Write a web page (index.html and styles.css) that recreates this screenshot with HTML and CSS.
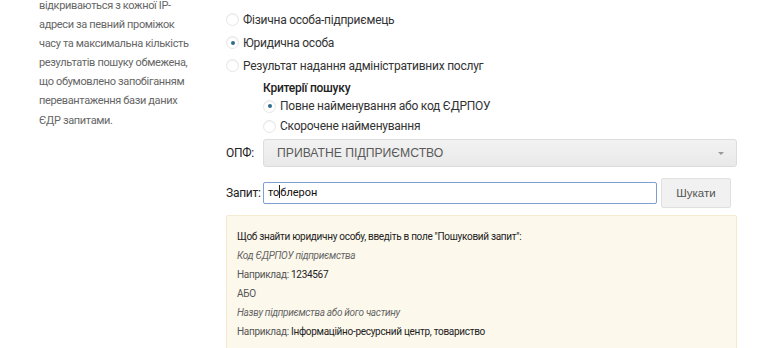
FILE: index.html
```html
<!DOCTYPE html>
<html lang="uk">
<head>
    <meta charset="UTF-8">
    <meta name="viewport" content="width=device-width, initial-scale=1.0">
    <title>Пошук в ЄДР</title>
    <link rel="stylesheet" href="styles.css">
</head>
<body>

    <div class="page">
        <aside class="sidebar">
            <p>відкриваються з кожної IP-адреси за певний проміжок часу та максимальна кількість результатів пошуку обмежена, що обумовлено запобіганням перевантаження бази даних ЄДР запитами.</p>
        </aside>

        <main class="search">
            <!-- Тип суб'єкта -->
            <div class="types">
                <label class="radio"><input type="radio" name="type"> Фізична особа-підприємець</label>
                <label class="radio"><input type="radio" name="type" checked> Юридична особа</label>
                <label class="radio"><input type="radio" name="type"> Результат надання адміністративних послуг</label>
            </div>

            <div class="criteria">
                <div class="criteria-title">Критерії пошуку</div>
                <label class="radio small"><input type="radio" name="crit" checked> Повне найменування або код ЄДРПОУ</label>
                <label class="radio small"><input type="radio" name="crit"> Скорочене найменування</label>
            </div>

            <div class="row opf-row">
                <span class="row-label">ОПФ:</span>
                <div class="select">
                    <span>ПРИВАТНЕ ПІДПРИЄМСТВО</span>
                    <span class="arrow"></span>
                </div>
            </div>

            <div class="row query-row">
                <span class="row-label">Запит:</span>
                <div class="query-input">то<span class="caret"></span>блерон</div>
                <button class="search-btn">Шукати</button>
            </div>

            <div class="hint">
                <p>Щоб знайти юридичну особу, введіть в поле "Пошуковий запит":</p>
                <p class="em">Код ЄДРПОУ підприємства</p>
                <p><span class="muted">Наприклад:</span> 1234567</p>
                <p class="muted">АБО</p>
                <p class="em">Назву підприємства або його частину</p>
                <p><span class="muted">Наприклад:</span> Інформаційно-ресурсний центр, товариство</p>
            </div>
        </main>
    </div>

</body>
</html>
```

FILE: styles.css
```css
body {
    font-family: Roboto, "Noto Sans", sans-serif;
    background-color: #fff;
    color: #333;
    margin: 0;
    padding: 0;
    overflow: hidden;
}

.page {
    display: flex;
    padding-left: 39px;
}

/* Left column */
.sidebar {
    width: 153px;
    flex-shrink: 0;
    margin-right: 34px;
}

.sidebar p {
    margin: -4px 0 0;
    font-size: 11px;
    letter-spacing: -0.35px;
    line-height: 19.1px;
    color: #666;
}

.search {
    width: 511px;
    padding-top: 8px;
}

/* Radios */
.radio {
    display: flex;
    align-items: center;
    font-size: 12px;
    letter-spacing: -0.25px;
    color: #333;
    height: 23px;
}

.radio input {
    appearance: none;
    width: 13px;
    height: 13px;
    margin: 0 4px 0 0;
    border: 1px solid #e6e6e6;
    border-radius: 50%;
    background: #fff;
    box-shadow: inset 0 1px 1px rgba(0, 0, 0, 0.06);
    display: grid;
    place-items: center;
}

.radio input:checked::after {
    content: "";
    width: 4px;
    height: 4px;
    border-radius: 50%;
    background: #2f6c8e;
}

.criteria {
    padding-left: 37px;
    padding-top: 3px;
}

.criteria-title {
    font-size: 12px;
    letter-spacing: -0.25px;
    font-weight: 500;
    color: #222;
    height: 16px;
    line-height: 16px;
}

.radio.small {
    height: 20px;
}

/* Form rows */
.row {
    display: flex;
    align-items: center;
}

.row-label {
    width: 37px;
    font-size: 12px;
    letter-spacing: -0.25px;
    color: #222;
}

.opf-row {
    margin-top: 3px;
}

.select {
    flex: 1;
    height: 26px;
    border: 1px solid #dcdcdc;
    border-radius: 3px;
    background: linear-gradient(#f2f2f2, #e9e9e9);
    display: flex;
    align-items: center;
    justify-content: space-between;
    padding: 0 12px 0 13px;
    font-family: "Liberation Sans", Arial, sans-serif;
    font-size: 12.2px;
    color: #5a5a5a;
}

.arrow {
    width: 0;
    height: 0;
    border-left: 3px solid transparent;
    border-right: 3px solid transparent;
    border-top: 3px solid #999;
}

.query-row {
    margin-top: 11px;
}

.query-input {
    flex: 1;
    height: 20px;
    border: 1px solid #7f9ed3;
    border-radius: 2px;
    padding: 0 4px;
    font-size: 11px;
    line-height: 20px;
    color: #111;
}

.caret {
    display: inline-block;
    width: 1px;
    height: 13px;
    background: #222;
    vertical-align: -2px;
}

.search-btn {
    width: 70px;
    height: 30px;
    margin-left: 4px;
    margin-right: 6px;
    border: 1px solid #e0e0e0;
    border-radius: 2px;
    background: #f1f1f1;
    font-family: "Liberation Sans", Arial, sans-serif;
    font-size: 11.5px;
    color: #555;
}

/* Hint box */
.hint {
    margin-top: 7px;
    background: #fcf8ec;
    border: 1px solid #f3ead0;
    border-radius: 2px;
    padding: 12px 10px 12px;
    height: 200px;
}

.hint p {
    margin: 0;
    font-size: 10px;
    letter-spacing: -0.3px;
    line-height: 18.9px;
    color: #222;
}

.hint .em {
    font-style: italic;
    color: #666;
}

.hint .muted {
    color: #555;
}
```
